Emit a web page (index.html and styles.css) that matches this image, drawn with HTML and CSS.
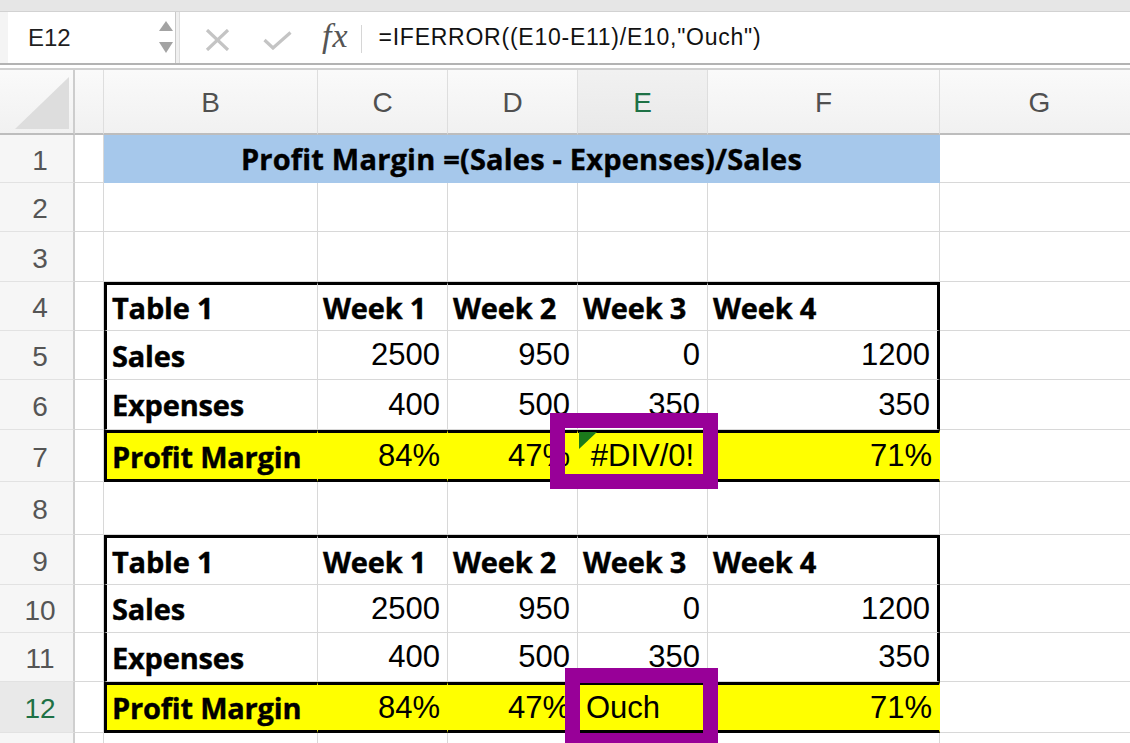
FILE: index.html
```html
<!DOCTYPE html>
<html>
<head>
<meta charset="utf-8">
<link rel="stylesheet" href="styles.css">
</head>
<body>
<div class="app">
  <div class="topband"></div>
  <div class="fbar">
    <div class="namebox">
      <span class="ref">E12</span>
      <span class="spin">
        <svg width="14" height="10" viewBox="0 0 14 10"><path d="M7 0 L14 10 L0 10 Z" fill="#a3a3a3"/></svg>
        <svg width="14" height="11" viewBox="0 0 14 11"><path d="M0 0 L14 0 L7 11 Z" fill="#a3a3a3"/></svg>
      </span>
    </div>
    <div class="fdiv"></div>
    <div class="ftools">
      <svg class="ic-x" width="25" height="22" viewBox="0 0 25 22"><path d="M2 1 L23 21 M23 1 L2 21" stroke="#c4c4c4" stroke-width="3.2" fill="none"/></svg>
      <svg class="ic-ok" width="29" height="19" viewBox="0 0 29 19"><path d="M1.5 9 L10 17 L27.5 1.5" stroke="#c4c4c4" stroke-width="3.2" fill="none"/></svg>
      <span class="fx">fx</span>
      <span class="fsep"></span>
    </div>
    <div class="formula">=IFERROR((E10-E11)/E10,"Ouch")</div>
  </div>
  <div class="fgap"></div>
  <div class="sheet">
    <div class="row hdr">
      <div class="corner"><svg width="54" height="52" viewBox="0 0 54 52"><path d="M54 0 L54 52 L0 52 Z" fill="#dddddd"/></svg></div>
      <div class="ch"></div>
      <div class="ch">B</div>
      <div class="ch">C</div>
      <div class="ch">D</div>
      <div class="ch sel">E</div>
      <div class="ch">F</div>
      <div class="ch">G</div>
    </div>

    <div class="row r1">
      <div class="rh">1</div><div class="cell"></div>
      <div class="cell ttl">Profit Margin =(Sales - Expenses)/Sales</div>
      <div class="cell"></div>
    </div>
    <div class="row r2">
      <div class="rh">2</div><div class="cell"></div><div class="cell"></div><div class="cell"></div><div class="cell"></div><div class="cell"></div><div class="cell"></div><div class="cell"></div>
    </div>
    <div class="row r3">
      <div class="rh">3</div><div class="cell"></div><div class="cell"></div><div class="cell"></div><div class="cell"></div><div class="cell"></div><div class="cell"></div><div class="cell"></div>
    </div>
    <div class="row r4">
      <div class="rh">4</div><div class="cell"></div>
      <div class="cell lbl tl tt">Table 1</div>
      <div class="cell lbl tt">Week 1</div>
      <div class="cell lbl tt">Week 2</div>
      <div class="cell lbl tt">Week 3</div>
      <div class="cell lbl tt tr">Week 4</div>
      <div class="cell"></div>
    </div>
    <div class="row r5">
      <div class="rh">5</div><div class="cell"></div>
      <div class="cell lbl tl">Sales</div>
      <div class="cell num">2500</div>
      <div class="cell num">950</div>
      <div class="cell num">0</div>
      <div class="cell num tr">1200</div>
      <div class="cell"></div>
    </div>
    <div class="row r6">
      <div class="rh">6</div><div class="cell"></div>
      <div class="cell lbl tl">Expenses</div>
      <div class="cell num">400</div>
      <div class="cell num">500</div>
      <div class="cell num">350</div>
      <div class="cell num tr">350</div>
      <div class="cell"></div>
    </div>
    <div class="row r7">
      <div class="rh">7</div><div class="cell"></div>
      <div class="cell lbl yl tl tt tb">Profit Margin</div>
      <div class="cell num yl tt tb">84%</div>
      <div class="cell num yl tt tb">47%</div>
      <div class="cell ctr yl tt tb anchor"><span class="flag"></span>#DIV/0!<span class="hlbox box1"></span></div>
      <div class="cell num yl tt tb">71%</div>
      <div class="cell"></div>
    </div>
    <div class="row r8">
      <div class="rh">8</div><div class="cell"></div><div class="cell"></div><div class="cell"></div><div class="cell"></div><div class="cell"></div><div class="cell"></div><div class="cell"></div>
    </div>
    <div class="row r9">
      <div class="rh">9</div><div class="cell"></div>
      <div class="cell lbl tl tt">Table 1</div>
      <div class="cell lbl tt">Week 1</div>
      <div class="cell lbl tt">Week 2</div>
      <div class="cell lbl tt">Week 3</div>
      <div class="cell lbl tt tr">Week 4</div>
      <div class="cell"></div>
    </div>
    <div class="row r10">
      <div class="rh">10</div><div class="cell"></div>
      <div class="cell lbl tl">Sales</div>
      <div class="cell num">2500</div>
      <div class="cell num">950</div>
      <div class="cell num">0</div>
      <div class="cell num tr">1200</div>
      <div class="cell"></div>
    </div>
    <div class="row r11">
      <div class="rh">11</div><div class="cell"></div>
      <div class="cell lbl tl">Expenses</div>
      <div class="cell num">400</div>
      <div class="cell num">500</div>
      <div class="cell num">350</div>
      <div class="cell num tr">350</div>
      <div class="cell"></div>
    </div>
    <div class="row r12">
      <div class="rh sel">12</div><div class="cell"></div>
      <div class="cell lbl yl tl tt tb">Profit Margin</div>
      <div class="cell num yl tt tb">84%</div>
      <div class="cell num yl tt tb">47%</div>
      <div class="cell txt yl tt tb anchor">Ouch<span class="hlbox box2"></span></div>
      <div class="cell num yl tt tb">71%</div>
      <div class="cell"></div>
    </div>
    <div class="row r13">
      <div class="rh"></div><div class="cell"></div><div class="cell"></div><div class="cell"></div><div class="cell"></div><div class="cell"></div><div class="cell"></div><div class="cell"></div>
    </div>
  </div>
</div>
</body>
</html>
```
FILE: styles.css
```css
html, body {
  margin: 0;
  padding: 0;
  background: #ffffff;
}
body {
  width: 1130px;
  height: 743px;
  overflow: hidden;
  font-family: "Liberation Sans", Arial, sans-serif;
}
.app {
  width: 1130px;
}
.topband {
  height: 11px;
  background: #e6e6e6;
  border-bottom: 1px solid #d2d2d2;
}
.fbar {
  height: 51px;
  display: flex;
  align-items: stretch;
  background: #f4f4f4;
}
.namebox {
  margin-left: 8px;
  width: 167px;
  background: #ffffff;
  display: flex;
  align-items: center;
  justify-content: space-between;
  box-sizing: border-box;
  padding-left: 20px;
  padding-right: 2px;
}
.ref {
  font-size: 24px;
  color: #1f1f1f;
}
.spin {
  display: flex;
  flex-direction: column;
  gap: 11px;
  margin-top: -2px;
}
.spin svg {
  display: block;
}
.fdiv {
  width: 5px;
  border-left: 1px solid #c9c9c9;
  border-right: 1px solid #dedede;
  box-sizing: border-box;
  background: #f0f0f0;
}
.ftools {
  display: flex;
  align-items: center;
  background: #ffffff;
  padding-left: 25px;
}
.ic-x {
  display: block;
  margin-top: 4px;
}
.ic-ok {
  display: block;
  margin-left: 33px;
  margin-top: 5px;
}
.fx {
  margin-left: 30px;
  font-family: "Liberation Serif", serif;
  font-style: italic;
  font-size: 34px;
  color: #555555;
  letter-spacing: 1px;
  margin-top: -3px;
}
.fsep {
  width: 1px;
  height: 28px;
  background: #d6d6d6;
  margin-left: 12px;
  margin-top: 2px;
}
.formula {
  flex: 1;
  background: #ffffff;
  display: flex;
  align-items: center;
  padding-left: 17px;
  font-size: 23px;
  letter-spacing: 0.75px;
  color: #111111;
}
.fgap {
  height: 3px;
  border-top: 2px solid #b3b3b3;
  border-bottom: 2px solid #d0d0d0;
}

/* sheet */
.row {
  display: grid;
  grid-template-columns: 75px 29px 214px 130px 130px 130px 232px 200px;
}
.hdr { height: 65px; }
.r1 { height: 48px; }
.r2 { height: 49px; }
.r3 { height: 50px; }
.r4 { height: 49px; }
.r5 { height: 49px; }
.r6 { height: 50px; }
.r7 { height: 52px; }
.r8 { height: 53px; }
.r9 { height: 50px; }
.r10 { height: 48px; }
.r11 { height: 49px; }
.r12 { height: 51px; }
.r13 { height: 50px; }

.corner {
  box-sizing: border-box;
  background: linear-gradient(#fafafa, #f1f1f1);
  border-right: 2px solid #cdcdcd;
  border-bottom: 2px solid #bdbdbd;
  display: flex;
  align-items: flex-end;
  justify-content: flex-end;
  padding: 0 4px 4px 0;
}
.corner svg { display: block; }
.ch {
  box-sizing: border-box;
  background: linear-gradient(#fafafa, #f1f1f1);
  border-right: 1px solid #dedede;
  border-bottom: 2px solid #bdbdbd;
  display: flex;
  align-items: center;
  justify-content: center;
  font-size: 28px;
  color: #505050;
  padding-top: 2px;
}
.ch.sel {
  background: linear-gradient(#f1f1f1, #e9e9e9);
  color: #1e7145;
}
.rh {
  box-sizing: border-box;
  background: #f6f6f6;
  border-right: 2px solid #cfcfcf;
  border-bottom: 1px solid #e2e2e2;
  display: flex;
  align-items: center;
  justify-content: center;
  font-size: 28px;
  color: #555555;
  padding-top: 4px;
  padding-left: 7px;
}
.rh.sel {
  background: #e9e9e9;
  color: #1e7145;
}

.cell {
  box-sizing: border-box;
  border-right: 1px solid #d8d8d8;
  border-bottom: 1px solid #d8d8d8;
  display: flex;
  align-items: center;
  padding: 0 7px;
  font-size: 31px;
  color: #000000;
  white-space: nowrap;
}
.ttl {
  grid-column: span 5;
  justify-content: center;
  background: #a6c8eb;
  border-right-color: #a6c8eb;
  border-bottom-color: #a6c8eb;
  font-family: "Open Sans", sans-serif;
  font-weight: 700;
  font-size: 29px;
  letter-spacing: 0.2px;
  -webkit-text-stroke: 0.4px #000000;
}
.lbl {
  font-family: "Open Sans", sans-serif;
  font-weight: 700;
  font-size: 29px;
  letter-spacing: -0.2px;
  -webkit-text-stroke: 0.4px #000000;
  padding-left: 5px;
}
.num {
  justify-content: flex-end;
}
.ctr {
  justify-content: center;
}
.txt {
  padding-left: 8px;
}
.yl {
  background: #ffff00;
  border-right-color: #ffff00;
}
.tl { border-left: 3px solid #000000; }
.tr { border-right: 3px solid #000000; }
.tt { border-top: 3px solid #000000; }
.tb { border-bottom: 3px solid #000000; }

.anchor {
  position: relative;
}
.flag {
  position: absolute;
  left: 1px;
  top: -1px;
  width: 0;
  height: 0;
  border-top: 17px solid #1b7a1b;
  border-right: 18px solid transparent;
}
.hlbox {
  position: absolute;
  box-sizing: border-box;
  border: 15px solid #980098;
  z-index: 5;
}
.box1 {
  left: -28px;
  top: -20px;
  width: 168px;
  height: 76px;
}
.box2 {
  left: -13px;
  top: -17px;
  width: 153px;
  height: 80px;
}
```
